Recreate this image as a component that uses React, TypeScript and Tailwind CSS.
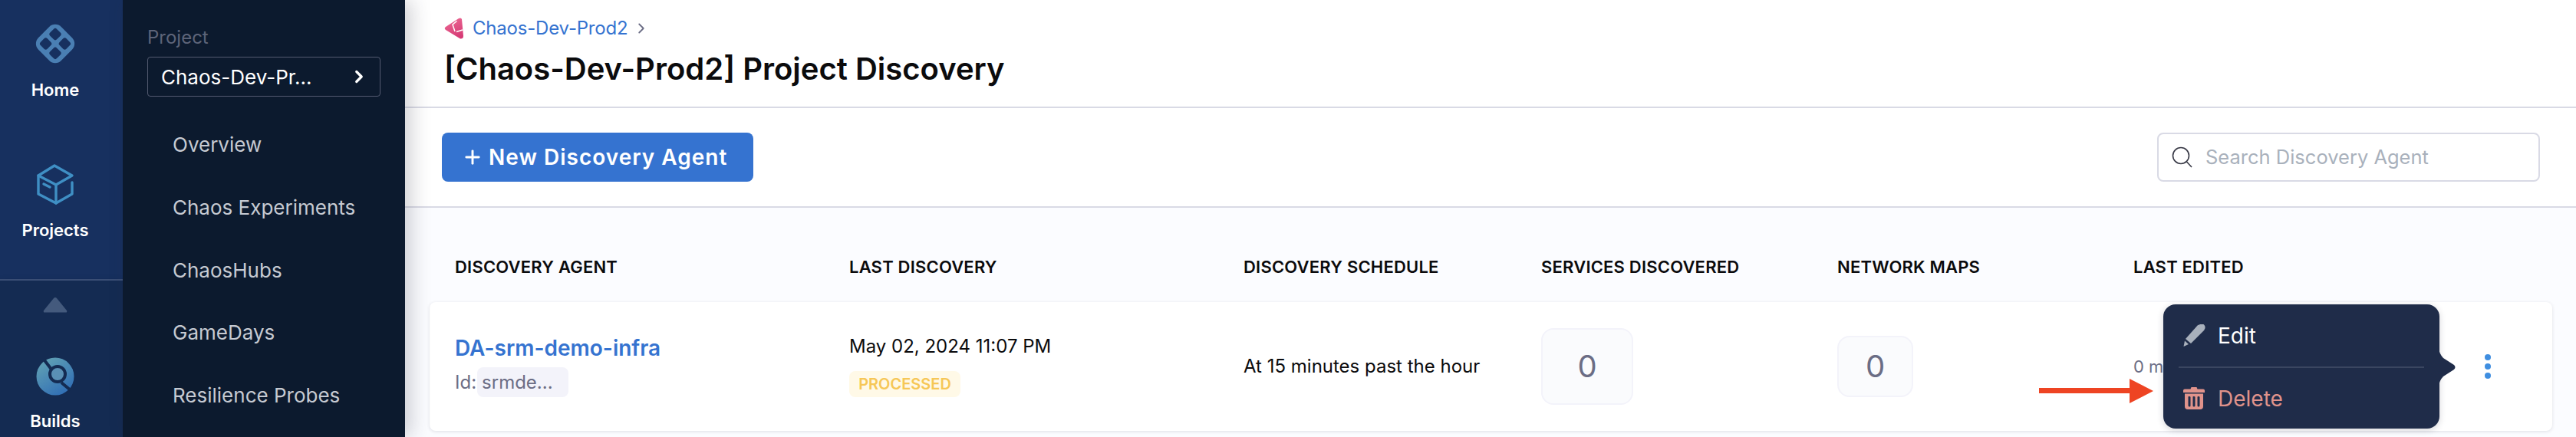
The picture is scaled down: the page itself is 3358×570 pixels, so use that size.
import { ChevronRight, Plus } from 'lucide-react';

const navItems = ['Overview', 'Chaos Experiments', 'ChaosHubs', 'GameDays', 'Resilience Probes'];

const HomeIcon = () => (
  <svg width="60" height="60" viewBox="0 0 60 60">
    <rect x="9" y="9" width="42" height="42" rx="11" transform="rotate(45 30 30)" fill="#4a7fb3" />
    <g fill="#17305f" transform="rotate(45 30 30)">
      <rect x="15" y="15" width="12.5" height="12.5" rx="3" />
      <rect x="32.5" y="15" width="12.5" height="12.5" rx="3" />
      <rect x="15" y="32.5" width="12.5" height="12.5" rx="3" />
      <rect x="32.5" y="32.5" width="12.5" height="12.5" rx="3" />
    </g>
  </svg>
);

const ProjectsIcon = () => (
  <svg width="50" height="54" viewBox="0 0 50 54" fill="none" stroke="#3f8fc4" strokeWidth="3.4" strokeLinejoin="round" strokeLinecap="round">
    <path d="M24 2 L47 15 L26 27 L3 15 Z" />
    <path d="M3 15 V39 L26 51 V27" />
    <path d="M26 51 L47 39 V24" />
    <path d="M10 26 L18 30" />
  </svg>
);

const BuildsIcon = () => (
  <svg width="50" height="50" viewBox="0 0 50 50">
    <defs>
      <linearGradient id="builds" x1="0.15" y1="0.1" x2="0.75" y2="1">
        <stop offset="0" stopColor="#5f9fb4" />
        <stop offset="1" stopColor="#2f6db5" />
      </linearGradient>
    </defs>
    <circle cx="25" cy="25" r="24.5" fill="url(#builds)" />
    <path d="M11 4 L21 17 M33 33 L45 43" stroke="#142b52" strokeWidth="4" />
    <circle cx="28" cy="22" r="10" fill="#5a90b5" stroke="#142b52" strokeWidth="4" />
  </svg>
);

const ChaosLogo = () => (
  <svg width="26" height="28" viewBox="0 0 26 28">
    <defs>
      <linearGradient id="chaos" x1="0.2" y1="0" x2="0.6" y2="1">
        <stop offset="0" stopColor="#ec6a94" />
        <stop offset="1" stopColor="#d63a75" />
      </linearGradient>
    </defs>
    <path d="M19 1 Q22 -0.5 23 2 L25 24 Q25 28 21 27.5 L2 16 Q-0.5 14 2 12 Z" fill="url(#chaos)" />
    <path d="M16.5 4.5 L11 9 L14 18 M16 18.5 L24 16" stroke="#fff" strokeWidth="1.5" fill="none" />
  </svg>
);

const PencilIcon = () => (
  <svg width="30" height="30" viewBox="0 0 30 30" fill="#a9b1bc">
    <path d="M19.5 0.5 L27.5 7.5 L10 25 L3 19 Z" />
    <circle cx="24" cy="4" r="4.6" />
    <path d="M0.5 29 L2 21.5 L7 26 Z" />
  </svg>
);

const TrashIcon = () => (
  <svg width="28" height="29" viewBox="0 0 28 29" fill="#e0938b">
    <path d="M10.5 0 H17.5 L18.5 2.5 H26 Q28 2.5 28 4.5 V7 H0 V4.5 Q0 2.5 2 2.5 H9.5 Z" />
    <path fillRule="evenodd" d="M2 8.5 H26 V25 Q26 29 22 29 H6 Q2 29 2 25 Z M7 12 Q6.5 12 6.5 13 V24 Q6.5 25.5 8.5 25.5 Q9.5 25.5 9.5 24 V13 Q9.5 12 8 12 Z M13 12 Q12.5 12 12.5 13 V24 Q12.5 25.5 14 25.5 Q15.5 25.5 15.5 24 V13 Q15.5 12 14 12 Z M19.5 12 Q18.5 12 18.5 13 V24 Q18.5 25.5 20 25.5 Q21.5 25.5 21.5 24 V13 Q21.5 12 20 12 Z" />
  </svg>
);

const SearchIcon = () => (
  <svg width="28" height="28" viewBox="0 0 28 28" fill="none" stroke="#383946" strokeWidth="1.6">
    <circle cx="13" cy="12" r="10.5" />
    <path d="M20.5 20 L27 27" />
  </svg>
);

const columns = ['DISCOVERY AGENT', 'LAST DISCOVERY', 'DISCOVERY SCHEDULE', 'SERVICES DISCOVERED', 'NETWORK MAPS', 'LAST EDITED'];

export default function App() {
  return (
    <div className="flex h-[570px] w-[3358px] overflow-hidden bg-white [font-family:Inter,sans-serif]">
      {/* Module rail */}
      <div className="flex w-[160px] shrink-0 flex-col bg-[#17305f] pr-4 text-white">
        <div className="flex h-[160px] flex-col items-center pt-[27px]">
          <HomeIcon />
          <span className="mt-[18px] text-[22px] leading-[24px] font-semibold">Home</span>
        </div>
        <div className="flex h-[204px] flex-col items-center pt-[54px]">
          <ProjectsIcon />
          <span className="mt-[20px] text-[22px] leading-[24px] font-semibold">Projects</span>
        </div>
        <div className="-mr-4 flex h-[66px] items-center justify-center border-t-2 border-[#3a4e75] bg-[#142b52] pr-4 shadow-[0_6px_10px_rgba(6,14,30,0.45)]">
          <svg width="32" height="22" viewBox="0 0 32 22" fill="#445a7d">
            <path d="M14 2 Q16 0 18 2 L31 18 Q32 21 29 20.5 H3 Q0 21 1 18 Z" />
          </svg>
        </div>
        <div className="-mr-4 flex flex-1 flex-col items-center bg-[#142b52] pt-[36px] pr-4">
          <BuildsIcon />
          <span className="mt-[21px] text-[22px] leading-[24px] font-semibold">Builds</span>
        </div>
      </div>

      {/* Project nav */}
      <div className="relative z-10 w-[368px] shrink-0 bg-[#0c1a2e] pt-[37px] pl-[32px] shadow-[8px_0_24px_rgba(40,41,61,0.22)]">
        <div className="text-[24px] leading-[24px] text-[#5d6479]">Project</div>
        <div className="mt-[13px] flex h-[52px] w-[304px] items-center justify-between rounded border border-[#535a70] pr-[14px] pl-[17px] text-[26px] text-white">
          <span>Chaos-Dev-Pr...</span>
          <ChevronRight size={26} strokeWidth={3} />
        </div>
        <div className="mt-[22px] flex flex-col pl-[33px] text-[26px] text-[#c6cad2]">
          {navItems.map((item) => (
            <div key={item} className="flex h-[81.7px] items-center">
              {item}
            </div>
          ))}
        </div>
      </div>

      {/* Main */}
      <div className="relative flex min-w-0 flex-1 flex-col">
        <div className="h-[141px] border-b-2 border-[#d9dae5] pt-[23px] pl-[51px]">
          <div className="flex h-[28px] items-center gap-[11px] text-[24px] text-[#3573d0]">
            <ChaosLogo />
            <span className="tracking-[-0.2px]">Chaos-Dev-Prod2</span>
            <ChevronRight size={22} className="-ml-1 text-[#6b6d85]" />
          </div>
          <h1 className="mt-[15px] text-[40px] leading-[48px] font-semibold text-[#0b0b0d]">[Chaos-Dev-Prod2] Project Discovery</h1>
        </div>

        <div className="flex h-[130px] items-center justify-between border-b-2 border-[#d9dae5] pr-[47px] pl-[48px]">
          <button className="flex h-[64px] w-[406px] items-center rounded-lg bg-[#3573d0] pl-[26px] text-[28px] font-semibold tracking-[1px] text-white">
            <Plus size={28} strokeWidth={2.5} className="mr-[7px]" />
            New Discovery Agent
          </button>
          <div className="flex h-[64px] w-[499px] items-center rounded-lg border-2 border-[#d9dae5] pl-[16px]">
            <SearchIcon />
            <span className="ml-[17px] text-[25.5px] text-[#a9b1bc]">Search Discovery Agent</span>
          </div>
        </div>

        <div className="flex-1 bg-[#fbfcff] pr-[31px] pl-[32px]">
          <div className="grid h-[123px] grid-cols-[514px_514px_388px_386px_386px_1fr] items-center pt-[31px] pl-[33px] text-[22px] font-semibold text-[#0b0b0d]">
            {columns.map((col) => (
              <div key={col} className="leading-[24px] tracking-[0.2px]">
                {col}
              </div>
            ))}
          </div>

          <div className="grid h-[168px] grid-cols-[514px_514px_388px_386px_386px_1fr] items-center rounded-lg bg-white pl-[33px] shadow-[0_1px_4px_rgba(40,41,61,0.14)]">
            <div className="flex flex-col">
              <span className="text-[28px] leading-[32px] font-semibold text-[#3573d0]">DA-srm-demo-infra</span>
              <div className="mt-[9px] flex items-center text-[24px] text-[#6b6d85]">
                <span>Id:</span>
                <span className="ml-[1px] flex h-[39px] w-[119px] items-center rounded-lg bg-[#f3f3fa] pl-[6px]">srmde...</span>
              </div>
            </div>
            <div className="flex flex-col items-start">
              <span className="text-[24px] leading-[28px] text-[#0b0b0d]">May 02, 2024 11:07 PM</span>
              <span className="mt-[18px] flex h-[34px] w-[145px] items-center justify-center rounded-lg bg-[#fff9e7] text-[20px] font-semibold text-[#f6c757]">PROCESSED</span>
            </div>
            <div className="text-[24px] text-[#0b0b0d]">At 15 minutes past the hour</div>
            <div className="flex h-[100px] w-[120px] items-center justify-center rounded-2xl border-2 border-[#f3f3fa] bg-[#fafbfd] text-[40px] text-[#6b6d85]">0</div>
            <div className="flex h-[80px] w-[99px] items-center justify-center rounded-2xl border-2 border-[#f3f3fa] bg-[#fafbfd] text-[40px] text-[#6b6d85]">0</div>
            <div className="flex items-center justify-between pr-[80px] text-[22px] text-[#6b6d85]">
              <span>0 minutes ago</span>
              <span className="flex flex-col gap-[4px]">
                <span className="size-[8px] rounded-full bg-[#3f8ee0]" />
                <span className="size-[8px] rounded-full bg-[#3f8ee0]" />
                <span className="size-[8px] rounded-full bg-[#3f8ee0]" />
              </span>
            </div>
          </div>
        </div>

        {/* Popover menu */}
        <div className="absolute top-[397px] left-[2292px] h-[162px] w-[360px] rounded-2xl bg-[#1f2c49] shadow-[0_2px_8px_rgba(40,41,61,0.2)]">
          <div className="flex h-[81px] items-center pl-[26px] text-[28px] text-white">
            <PencilIcon />
            <span className="ml-[15px]">Edit</span>
          </div>
          <div className="mx-[20px] h-[2px] bg-[#3a4660]" />
          <div className="flex h-[79px] items-center pl-[26px] text-[28px] text-[#e0938b]">
            <TrashIcon />
            <span className="ml-[17px]">Delete</span>
          </div>
          <svg className="absolute top-[57px] left-[359px]" width="23" height="50" viewBox="0 0 23 50" fill="#1f2c49">
            <path d="M0 0 Q1 8 6 13 L20 22 Q23 25 20 28 L6 37 Q1 42 0 50 Z" />
          </svg>
        </div>

        {/* Annotation arrow */}
        <svg className="absolute top-[494px] left-[2130px]" width="150" height="32" viewBox="0 0 150 32" fill="#ee4423">
          <path d="M0 12 H118 V0 L149 16 L118 32 V19 H0 Z" />
        </svg>
      </div>
    </div>
  );
}
